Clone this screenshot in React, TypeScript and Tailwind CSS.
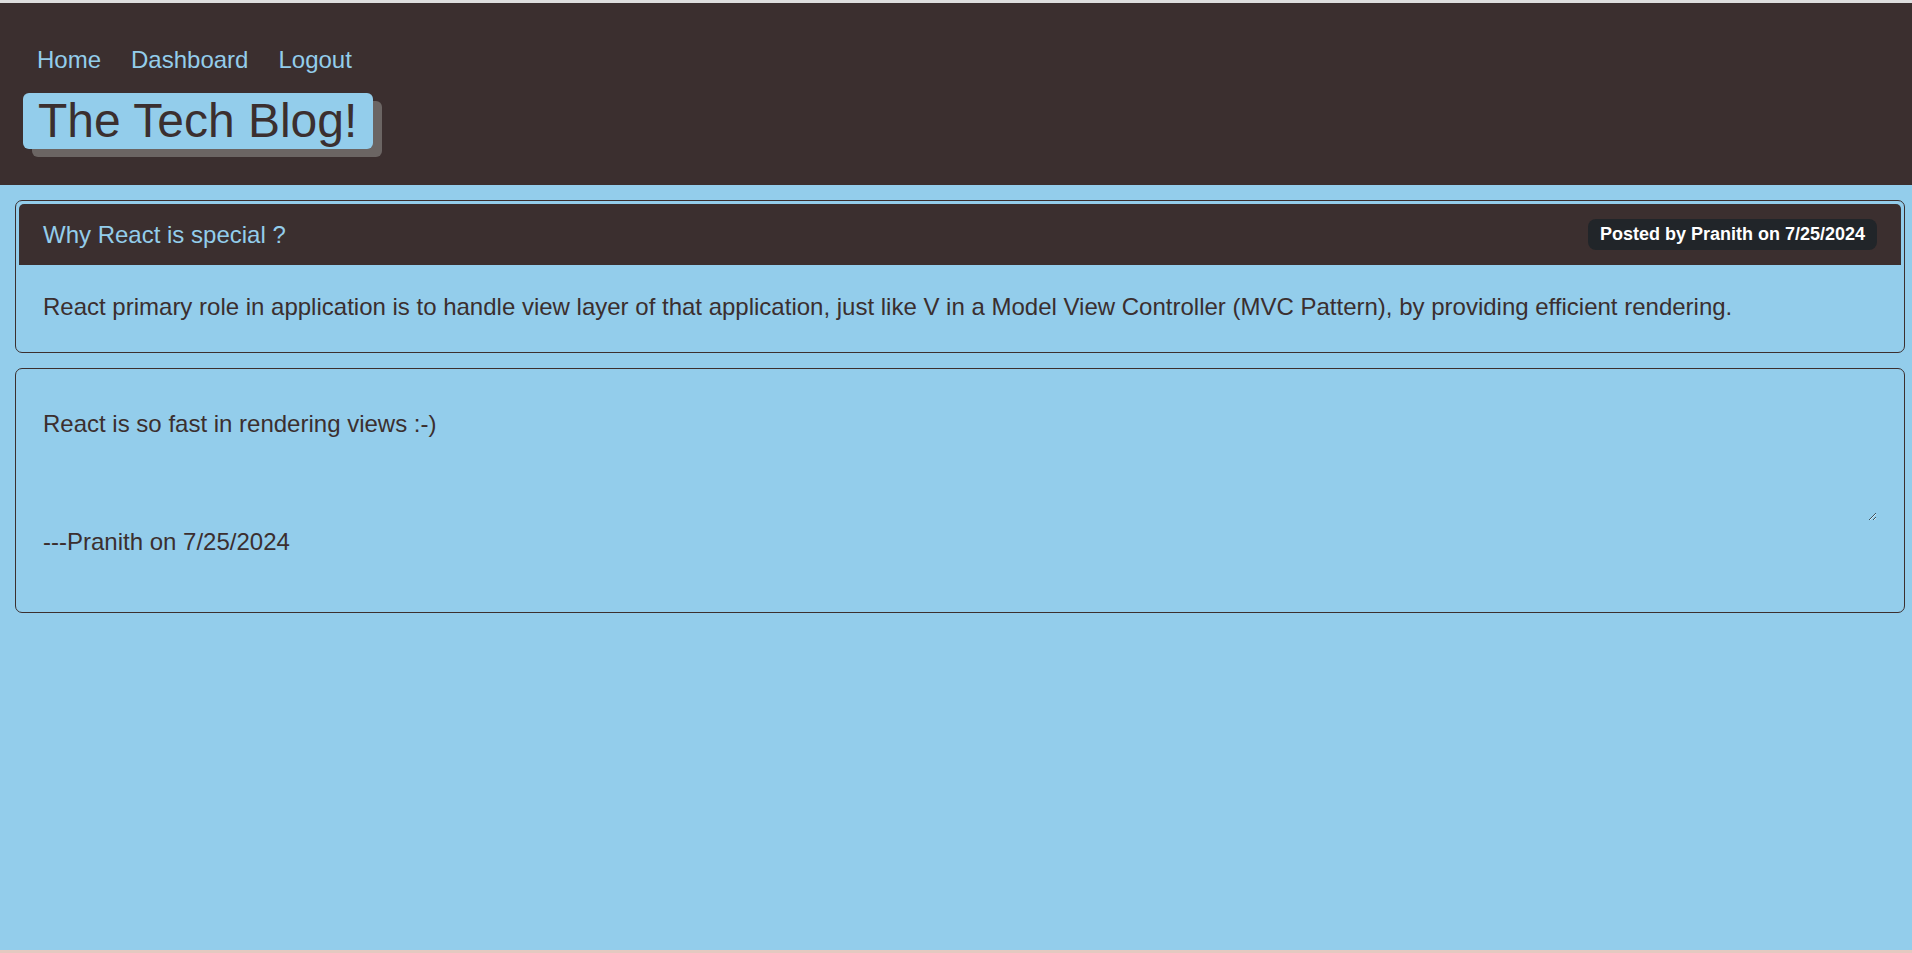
import React from 'react';

const font = { fontFamily: '"Liberation Sans", Arial, sans-serif' };

function Header() {
    return (
        <header className="bg-[#3b2f2f] px-[23px] pt-[39px] pb-[36px]">
            <nav className="flex gap-[30px] pl-[14px] text-[24px] leading-[36px] text-[#93cdeb]">
                <a href="#" className="hover:underline">Home</a>
                <a href="#" className="hover:underline">Dashboard</a>
                <a href="#" className="hover:underline">Logout</a>
            </nav>
            <div className="mt-[15px] flex">
                <h1 className="bg-[#93cdeb] text-[#3b2f2f] text-[48px] leading-[56px] pl-[15px] pr-[16px] rounded-[6px] shadow-[9px_8px_0_0_#6b6563]">
                    The Tech Blog!
                </h1>
            </div>
        </header>
    );
}

function PostCard() {
    return (
        <div className="ml-[15px] mr-[7px] border border-[#3b2f2f] rounded-[7px] p-[3px]">
            <div className="flex items-center justify-between h-[61px] px-[24px] bg-[#3b2f2f] rounded-t-[5px]">
                <h2 className="text-[24px] text-[#93cdeb]">Why React is special ?</h2>
                <span className="bg-[#212529] text-white font-bold text-[18px] leading-[31px] px-[12px] rounded-[8px]">
                    Posted by Pranith on 7/25/2024
                </span>
            </div>
            <p className="p-[24px] text-[24px] leading-[36px] text-[#3b2f2f]">
                React primary role in application is to handle view layer of that application, just like V in a Model View Controller (MVC Pattern), by providing efficient rendering.
            </p>
        </div>
    );
}

function CommentCard() {
    return (
        <div className="ml-[15px] mr-[7px] mt-[15px] border border-[#3b2f2f] rounded-[7px] p-[3px]">
            <div className="p-[24px] pb-[49px]">
                <textarea
                    readOnly
                    defaultValue="React is so fast in rendering views :-)"
                    className="block w-full h-[125px] pt-[10px] bg-transparent text-[#3b2f2f] text-[24px] leading-[36px] outline-none border-0"
                    style={font}
                />
                <p className="mt-[3px] text-[24px] leading-[36px] text-[#3b2f2f]">---Pranith on 7/25/2024</p>
            </div>
        </div>
    );
}

export default function App() {
    return (
        <div className="min-h-[953px] flex flex-col bg-[#93cdeb]" style={font}>
            <div className="h-[3px] bg-[#dedede]"></div>
            <Header />
            <main className="flex-1 pt-[15px]">
                <PostCard />
                <CommentCard />
            </main>
            <div className="h-[3px] bg-[#e4c9c1]"></div>
        </div>
    );
}
